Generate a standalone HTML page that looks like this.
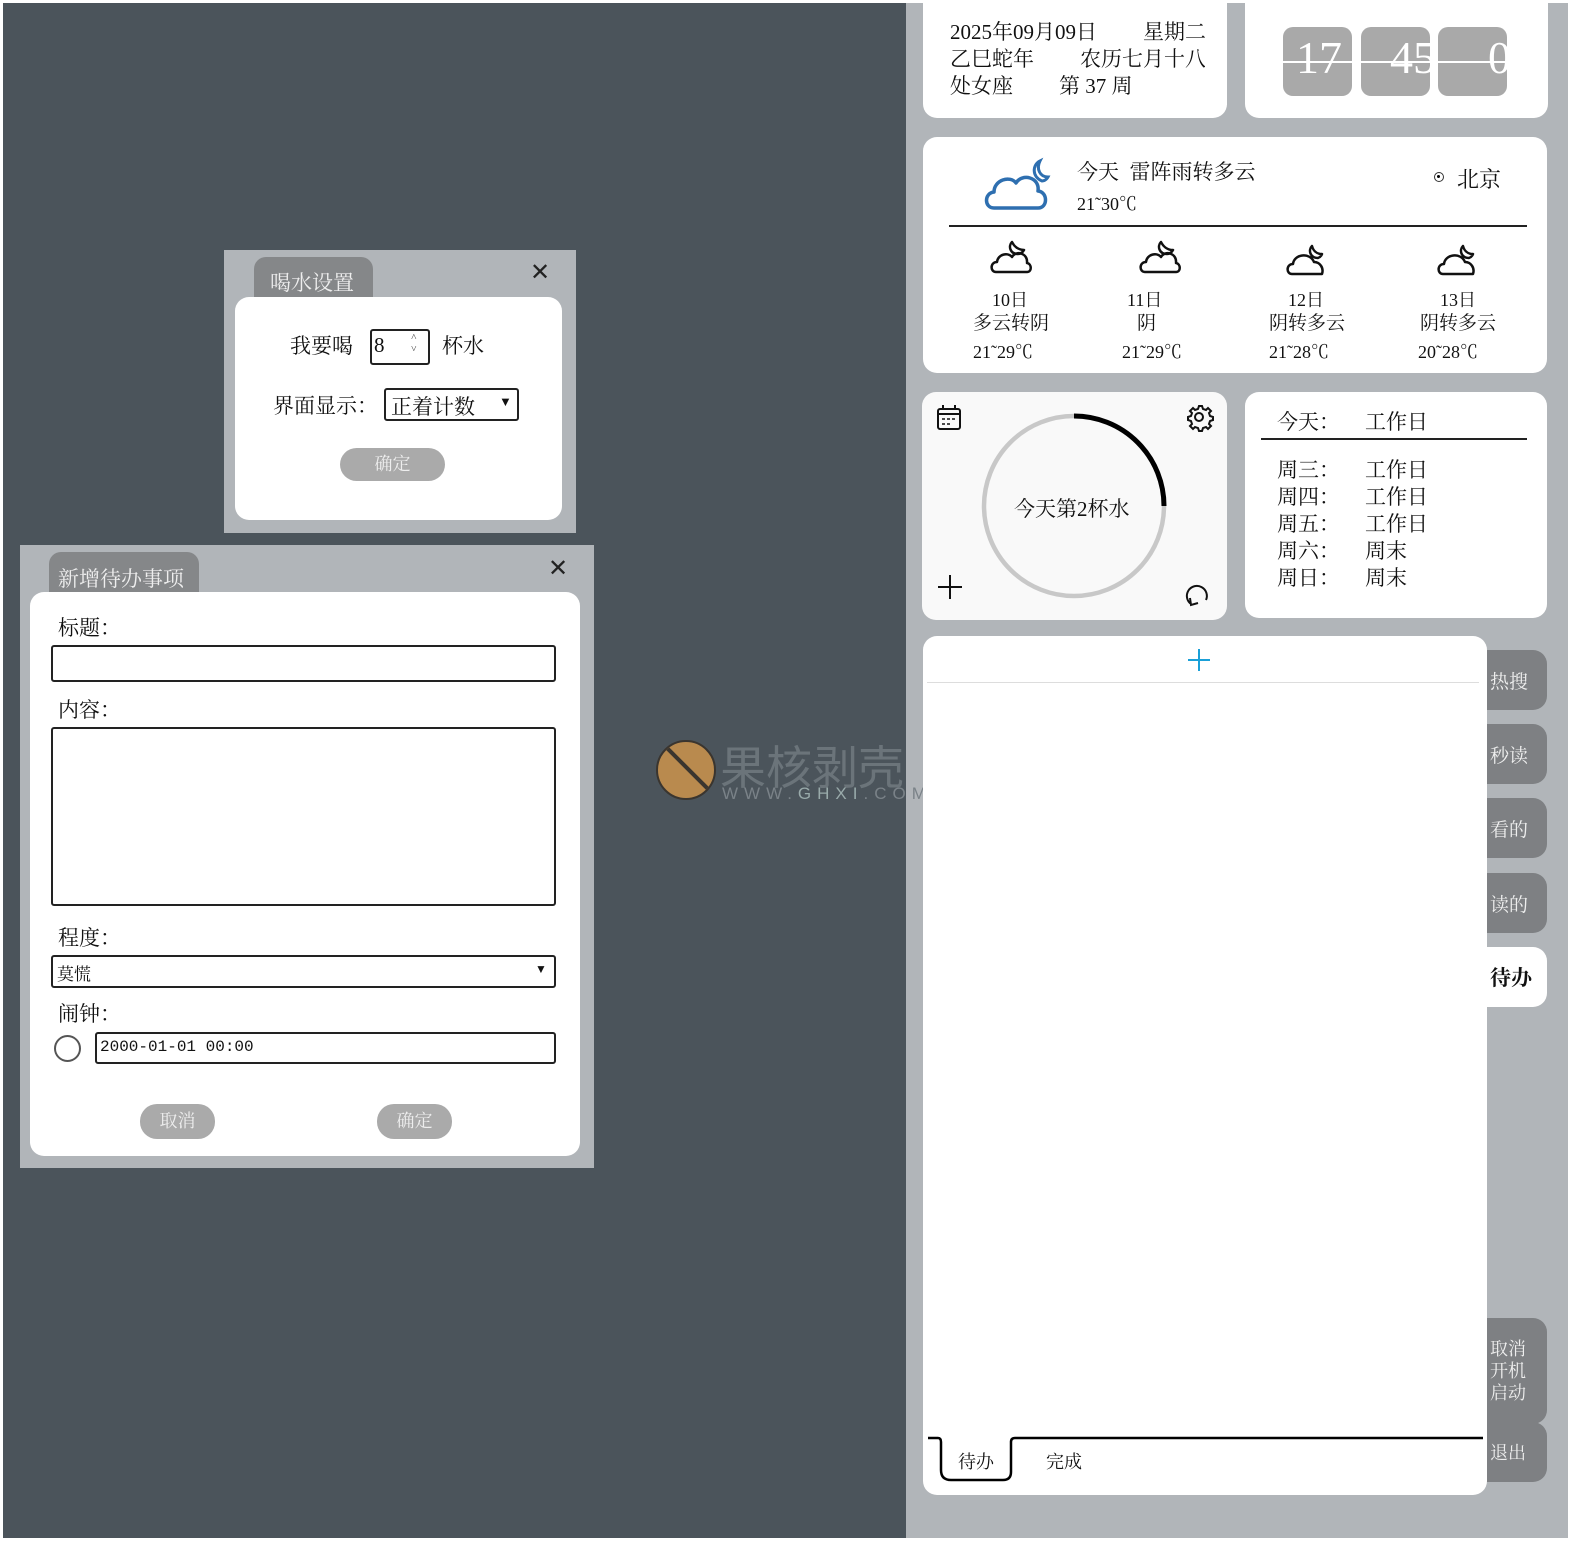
<!DOCTYPE html>
<html><head><meta charset="utf-8">
<style>
*{margin:0;padding:0;box-sizing:border-box}
body{width:1587px;height:1558px;background:#fff;position:relative;overflow:hidden;font-family:"Liberation Serif","Noto Serif CJK SC","Noto Sans CJK SC",serif;color:#111}
.a{position:absolute}
.card{position:absolute;background:#fff;border-radius:14px}
.t{position:absolute;white-space:nowrap}
.side{position:absolute;left:1487px;width:60px;background:#7e8083;border-radius:0 14px 14px 0;color:#eee;font-size:19px;display:flex;align-items:center;padding-left:3px}
.btn{position:absolute;background:#aaa;color:#eee;border-radius:17px;text-align:center;font-size:18px}
.inp{position:absolute;border:2px solid #222;border-radius:3px;background:#fff}
</style></head><body>
<div class="a" style="left:3px;top:3px;width:903px;height:1535px;background:#4b545b"></div>
<div class="a" style="left:906px;top:3px;width:662px;height:1535px;background:#b1b5b9"></div>

<!-- watermark -->
<div class="a" style="left:656px;top:740px;width:60px;height:60px;border-radius:50%;background:#b98a4e;border:2px solid #3a352f;overflow:hidden"><div class="a" style="left:-5px;top:26px;width:72px;height:4px;background:#3a352f;transform:rotate(45deg)"></div></div>
<div class="t" style="left:720px;top:732px;font-size:46px;color:#6b747a;font-family:'Noto Sans CJK SC',sans-serif">果核剥壳</div>
<div class="t" style="left:722px;top:784px;font-size:17px;color:#7a8288;letter-spacing:6px;font-family:'Liberation Sans',sans-serif">WWW.<span style="color:#9aa">GHXI</span>.COM</div>

<!-- date card -->
<div class="card" style="left:923px;top:3px;width:304px;height:115px;border-radius:0 0 14px 14px"></div>
<div class="t" style="left:950px;top:19px;font-size:21px;line-height:27px">2025年09月09日<span style="margin-left:46px">星期二</span></div>
<div class="a" style="left:1205px;top:15px;width:22px;height:90px;background:#fff"></div>
<div class="t" style="left:950px;top:46px;font-size:21px;line-height:27px">乙巳蛇年<span style="margin-left:46px">农历七月十八</span></div>
<div class="a" style="left:1205px;top:44px;width:22px;height:30px;background:#fff"></div>
<div class="t" style="left:950px;top:73px;font-size:21px;line-height:27px">处女座<span style="margin-left:46px">第 37 周</span></div>

<!-- clock card -->
<div class="card" style="left:1245px;top:3px;width:303px;height:115px;border-radius:0 0 14px 14px"></div>
<div class="a" style="left:1283px;top:27px;width:69px;height:69px;background:#a9a9a9;border-radius:10px"></div>
<div class="a" style="left:1361px;top:27px;width:69px;height:69px;background:#a9a9a9;border-radius:10px"></div>
<div class="a" style="left:1438px;top:27px;width:69px;height:69px;background:#a9a9a9;border-radius:10px;overflow:hidden"><div class="t" style="left:50px;top:4px;font-size:46px;color:#fff">0</div></div>
<div class="t" style="left:1296px;top:31px;font-size:46px;color:#fff">17</div>
<div class="a" style="left:1361px;top:27px;width:69px;height:69px;overflow:hidden"><div class="t" style="left:29px;top:4px;font-size:46px;color:#fff">45</div></div>
<div class="a" style="left:1283px;top:61px;width:224px;height:2px;background:#fff"></div>

<!-- weather card -->
<div class="card" style="left:923px;top:137px;width:624px;height:236px"></div>
<svg class="a" style="left:980px;top:155px" width="75" height="60" viewBox="0 0 75 60"><path d="M14 53 C4 53 4 38 14 37 C14 25 30 20 36 28 C42 18 60 22 58 36 C68 37 68 53 58 53 Z" fill="none" stroke="#2e6fb0" stroke-width="3.5" stroke-linejoin="round"/><path d="M60 6 C52 10 52 22 62 26 C66 26 68 22 68 22 C60 22 56 14 60 6 Z" fill="none" stroke="#2e6fb0" stroke-width="3"/></svg>
<div class="t" style="left:1077px;top:156px;font-size:21px">今天 &nbsp;雷阵雨转多云</div>
<div class="t" style="left:1077px;top:190px;font-size:18px">21˜30℃</div>
<div class="a" style="left:1434px;top:172px;width:10px;height:10px;border:1.5px solid #333;border-radius:50%"><div class="a" style="left:2px;top:2px;width:3px;height:3px;background:#000;border-radius:50%"></div></div>
<div class="t" style="left:1457px;top:163px;font-size:22px">北京</div>
<div class="a" style="left:949px;top:225px;width:578px;height:1.5px;background:#222"></div>
<svg class="a" style="left:0;top:0" width="1587" height="300">
<g fill="none" stroke="#111" stroke-width="2.5" stroke-linejoin="round">
<g transform="translate(990,240)"><path d="M6 32 C0 32 0 22 7 22 C8 14 18 12 22 17 C26 10 38 13 37 23 C42 24 42 32 37 32 Z"/><path d="M22 2 C18 6 20 14 28 14 C32 14 34 10 34 10 C28 10 24 6 22 2 Z"/></g>
<g transform="translate(1139,240)"><path d="M6 32 C0 32 0 22 7 22 C8 14 18 12 22 17 C26 10 38 13 37 23 C42 24 42 32 37 32 Z"/><path d="M22 2 C18 6 20 14 28 14 C32 14 34 10 34 10 C28 10 24 6 22 2 Z"/></g>
<g transform="translate(1286,242)"><path d="M6 32 C0 32 0 22 7 22 C8 12 24 10 28 20 C34 20 38 26 36 32 Z"/><path d="M26 4 C22 8 24 16 32 16 C35 15 36 12 36 12 C30 12 27 8 26 4 Z"/></g>
<g transform="translate(1437,242)"><path d="M6 32 C0 32 0 22 7 22 C8 12 24 10 28 20 C34 20 38 26 36 32 Z"/><path d="M26 4 C22 8 24 16 32 16 C35 15 36 12 36 12 C30 12 27 8 26 4 Z"/></g>
</g></svg>
<div class="t" style="left:992px;top:286px;font-size:18px">10日</div>
<div class="t" style="left:973px;top:308px;font-size:19px">多云转阴</div>
<div class="t" style="left:973px;top:338px;font-size:18px">21˜29℃</div>
<div class="t" style="left:1127px;top:286px;font-size:18px">11日</div>
<div class="t" style="left:1137px;top:308px;font-size:19px">阴</div>
<div class="t" style="left:1122px;top:338px;font-size:18px">21˜29℃</div>
<div class="t" style="left:1288px;top:286px;font-size:18px">12日</div>
<div class="t" style="left:1269px;top:308px;font-size:19px">阴转多云</div>
<div class="t" style="left:1269px;top:338px;font-size:18px">21˜28℃</div>
<div class="t" style="left:1440px;top:286px;font-size:18px">13日</div>
<div class="t" style="left:1420px;top:308px;font-size:19px">阴转多云</div>
<div class="t" style="left:1418px;top:338px;font-size:18px">20˜28℃</div>

<!-- water card -->
<div class="card" style="left:922px;top:392px;width:305px;height:228px;background:#f9f9f9"></div>
<svg class="a" style="left:922px;top:392px" width="305" height="228">
<circle cx="152" cy="114" r="90" fill="none" stroke="#c8c8c8" stroke-width="4.5"/>
<path d="M152 24 A90 90 0 0 1 242 114" fill="none" stroke="#000" stroke-width="5"/>
<g fill="none" stroke="#111" stroke-width="2"><rect x="16" y="17" width="22" height="20" rx="2"/><line x1="16" y1="22" x2="38" y2="22"/><line x1="21" y1="13" x2="21" y2="18"/><line x1="33" y1="13" x2="33" y2="18"/><path d="M20 27h3M25 27h3M30 27h3M20 32h3M25 32h3" stroke-width="1.5"/>
<line x1="28" y1="183" x2="28" y2="207"/><line x1="16" y1="195" x2="40" y2="195"/>
<path d="M269 212 A10 10 0 1 1 284 208 M268 206 L269 213 L276 211"/>
<circle cx="277" cy="25" r="4"/><path d="M277 14 l3 0 1 3 3 1 2-2 3 3-2 2 1 3 3 1v3l-3 1-1 3 2 2-3 3-2-2-3 1-1 3h-3l-1-3-3-1-2 2-3-3 2-2-1-3-3-1v-3l3-1 1-3-2-2 3-3 2 2 3-1z"/></g>
</svg>
<div class="t" style="left:1014px;top:493px;font-size:21px">今天第2杯水</div>

<!-- workday card -->
<div class="card" style="left:1245px;top:392px;width:302px;height:226px"></div>
<div class="t" style="left:1277px;top:406px;font-size:21px">今天：</div><div class="t" style="left:1365px;top:406px;font-size:21px">工作日</div>
<div class="a" style="left:1261px;top:438px;width:266px;height:2px;background:#222"></div>
<div class="t" style="left:1277px;top:457px;font-size:21px;line-height:27px">周三：<br>周四：<br>周五：<br>周六：<br>周日：</div>
<div class="t" style="left:1365px;top:457px;font-size:21px;line-height:27px">工作日<br>工作日<br>工作日<br>周末<br>周末</div>

<!-- side tabs -->
<div class="side" style="top:650px;height:60px">热搜</div>
<div class="side" style="top:724px;height:60px">秒读</div>
<div class="side" style="top:798px;height:60px">看的</div>
<div class="side" style="top:873px;height:60px">读的</div>
<div class="side" style="top:947px;height:60px;background:#fff;color:#111;font-weight:bold;font-size:21px">待办</div>
<div class="side" style="top:1318px;height:106px;line-height:22px;font-size:18px">取消<br>开机<br>启动</div>
<div class="side" style="top:1422px;height:60px;font-size:18px">退出</div>

<!-- todo card -->
<div class="card" style="left:923px;top:636px;width:564px;height:859px"></div>
<div class="a" style="left:1188px;top:659px;width:22px;height:1.5px;background:#1aa0d8"></div>
<div class="a" style="left:1198px;top:649px;width:1.5px;height:22px;background:#1aa0d8"></div>
<div class="a" style="left:927px;top:682px;width:552px;height:1px;background:#ddd"></div>
<svg class="a" style="left:923px;top:1430px" width="564" height="60"><path d="M5 8 H15 Q18 8 18 12 V40 Q18 50 28 50 H80 Q88 50 88 42 V12 Q88 8 92 8 H560" fill="none" stroke="#000" stroke-width="2.5"/></svg>
<div class="t" style="left:958px;top:1448px;font-size:18px">待办</div>
<div class="t" style="left:1046px;top:1448px;font-size:18px">完成</div>

<!-- dialog 1 -->
<div class="a" style="left:224px;top:250px;width:352px;height:283px;background:#b1b5b9"></div>
<div class="a" style="left:254px;top:257px;width:119px;height:45px;background:#858789;border-radius:12px 12px 0 0"></div>
<div class="t" style="left:270px;top:267px;font-size:21px;color:#eee">喝水设置</div>
<div class="t" style="left:530px;top:258px;font-size:24px;font-family:'Liberation Sans',sans-serif;color:#222">✕</div>
<div class="card" style="left:235px;top:297px;width:327px;height:223px"></div>
<div class="t" style="left:290px;top:330px;font-size:21px">我要喝</div>
<div class="inp" style="left:370px;top:329px;width:60px;height:36px"></div>
<div class="t" style="left:374px;top:333px;font-size:21px">8</div>
<div class="t" style="left:411px;top:332px;font-size:10px;color:#333;line-height:12px">˄<br>˅</div>
<div class="t" style="left:442px;top:330px;font-size:21px">杯水</div>
<div class="t" style="left:273px;top:390px;font-size:21px">界面显示：</div>
<div class="inp" style="left:384px;top:388px;width:135px;height:33px"></div>
<div class="t" style="left:391px;top:391px;font-size:21px">正着计数</div>
<div class="t" style="left:499px;top:394px;font-size:13px">▼</div>
<div class="btn" style="left:340px;top:448px;width:105px;height:33px;line-height:33px">确定</div>

<!-- dialog 2 -->
<div class="a" style="left:20px;top:545px;width:574px;height:623px;background:#b1b5b9"></div>
<div class="a" style="left:49px;top:552px;width:150px;height:45px;background:#858789;border-radius:12px 12px 0 0"></div>
<div class="t" style="left:58px;top:563px;font-size:21px;color:#eee">新增待办事项</div>
<div class="t" style="left:548px;top:554px;font-size:24px;font-family:'Liberation Sans',sans-serif;color:#222">✕</div>
<div class="card" style="left:30px;top:592px;width:550px;height:564px"></div>
<div class="t" style="left:58px;top:612px;font-size:21px">标题：</div>
<div class="inp" style="left:51px;top:645px;width:505px;height:37px"></div>
<div class="t" style="left:58px;top:694px;font-size:21px">内容：</div>
<div class="inp" style="left:51px;top:727px;width:505px;height:179px"></div>
<div class="t" style="left:58px;top:922px;font-size:21px">程度：</div>
<div class="inp" style="left:51px;top:955px;width:505px;height:33px"></div>
<div class="t" style="left:57px;top:960px;font-size:17px">莫慌</div>
<div class="t" style="left:535px;top:962px;font-size:12px">▼</div>
<div class="t" style="left:58px;top:998px;font-size:21px">闹钟：</div>
<div class="a" style="left:54px;top:1035px;width:27px;height:27px;border:2px solid #555;border-radius:50%"></div>
<div class="inp" style="left:95px;top:1032px;width:461px;height:32px"></div>
<div class="t" style="left:100px;top:1038px;font-size:16px;font-family:'Liberation Mono',monospace">2000-01-01 00:00</div>
<div class="btn" style="left:140px;top:1104px;width:75px;height:35px;line-height:35px">取消</div>
<div class="btn" style="left:377px;top:1104px;width:75px;height:35px;line-height:35px">确定</div>
</body></html>
